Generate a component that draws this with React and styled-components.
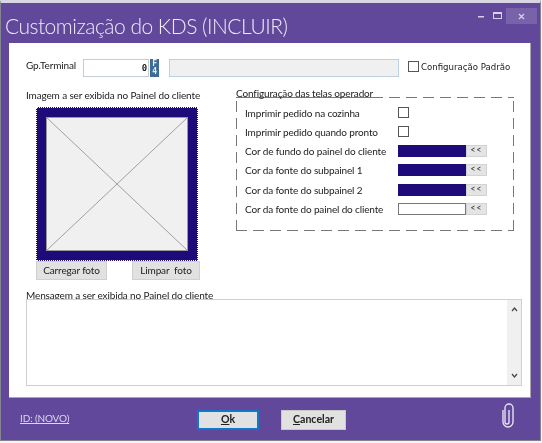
import React from "react";
import styled, { createGlobalStyle } from "styled-components";

const purple = "#61489b";
const navy = "#1e0a78";

const GlobalStyle = createGlobalStyle`
  html, body {
    margin: 0;
    background: #f4f4f6;
    font-family: Lato, "Noto Sans", sans-serif;
    color: #222;
  }
`;

const Frame = styled.div`
  box-sizing: border-box;
  width: 541px;
  height: 441px;
  padding: 0 2px 0 1px;
  background: ${purple};
  border: 1px solid #85858f;
  border-top: 3px solid #d9d6e4;
  display: flex;
  flex-direction: column;
  filter: blur(0.35px);
`;

const TitleBar = styled.div`
  height: 40px;
  flex: none;
  display: flex;
  justify-content: space-between;
  padding: 0 1px 0 3px;
`;

const Title = styled.h1`
  margin: 0;
  padding-top: 9px;
  font-family: Lato, "Open Sans", sans-serif;
  font-size: 21px;
  line-height: 28px;
  font-weight: 300;
  letter-spacing: -0.5px;
  color: #eeeaf6;
  white-space: nowrap;
`;

const WindowButtons = styled.div`
  display: flex;
  height: 16px;
  margin-top: 5px;
  color: #d8d2e8;
`;

const WindowButton = styled.div`
  width: ${(p) => p.$w}px;
  display: flex;
  align-items: center;
  justify-content: center;
  background: ${(p) => (p.$active ? "#7863ab" : "transparent")};
`;

const Panel = styled.div`
  box-sizing: border-box;
  width: 522px;
  height: 355px;
  flex: none;
  margin-left: 7px;
  padding: 16px 9px 0 17px;
  background: #fff;
  border: 1px solid #a9a6b0;
  border-width: 0 1px 1px 0;
  font-size: 10px;
  letter-spacing: -0.14px;
`;

const TopRow = styled.div`
  display: flex;
  align-items: center;
  height: 18px;
`;

const FieldLabel = styled.span`
  width: 57px;
  flex: none;
  padding-bottom: 6px;
  white-space: nowrap;
`;

const NumberInput = styled.div`
  box-sizing: border-box;
  width: 66px;
  height: 18px;
  border: 1px solid #c6ccd4;
  font-family: "DejaVu Sans Mono", monospace;
  font-weight: 700;
  font-size: 9px;
  line-height: 16px;
  text-align: right;
  padding-right: 1px;
`;

const LookupButton = styled.div`
  box-sizing: border-box;
  width: 9px;
  height: 18px;
  margin-left: 1px;
  background: #3c6d96;
  color: #e8eef5;
  font-family: "DejaVu Sans Mono", monospace;
  font-weight: 700;
  font-size: 8px;
  line-height: 8px;
  text-align: center;
  padding-top: 1px;
`;

const ReadonlyField = styled.div`
  box-sizing: border-box;
  width: 230px;
  height: 18px;
  margin-left: 10px;
  background: #f0f0f0;
  border: 1px solid #bcd0e2;
`;

const Check = styled.span`
  box-sizing: border-box;
  display: block;
  flex: none;
  width: 11px;
  height: 11px;
  background: #fff;
  border: 1px solid #555;
`;

const DefaultCheck = styled.label`
  display: flex;
  align-items: center;
  gap: 2px;
  margin: 0 0 3px 9px;
  font-family: "DejaVu Sans", sans-serif;
  font-size: 8.6px;
  letter-spacing: 0;
  white-space: nowrap;
`;

const Columns = styled.div`
  display: flex;
  margin-top: 11px;
`;

const ImageColumn = styled.div`
  width: 210px;
  flex: none;
`;

const Caption = styled.div`
  height: 14px;
  line-height: 14px;
  white-space: nowrap;
`;

const PhotoFrame = styled.div`
  box-sizing: border-box;
  width: 162px;
  height: 154px;
  margin: 5px 0 0 10px;
  background: ${navy};
  border: 1px dotted #fff;
  padding: 9px;
`;

const Placeholder = styled.svg`
  display: block;
  width: 142px;
  height: 134px;
  background: #f0f0f0;
`;

const PhotoButtons = styled.div`
  display: flex;
  justify-content: space-between;
  width: 164px;
  margin: 0 0 0 10px;
`;

const GrayButton = styled.div`
  box-sizing: border-box;
  width: ${(p) => p.$w}px;
  height: 19px;
  line-height: 17px;
  text-align: center;
  background: #e1e1e1;
  border: 1px solid #d0d0d0;
  white-space: nowrap;
`;

const Group = styled.div`
  position: relative;
  box-sizing: border-box;
  width: 278px;
  height: 134px;
  margin-top: 9px;
  padding: 6px 0 0 9px;
  background:
    repeating-linear-gradient(90deg, #777 0 11px, transparent 11px 17px) left top / 100% 1px no-repeat,
    repeating-linear-gradient(90deg, #777 0 11px, transparent 11px 17px) left bottom / 100% 1px no-repeat,
    repeating-linear-gradient(0deg, #777 0 11px, transparent 11px 17px) left top / 1px 100% no-repeat,
    repeating-linear-gradient(0deg, #777 0 11px, transparent 11px 17px) right top / 1px 100% no-repeat;
`;

const Legend = styled.div`
  position: absolute;
  left: 0;
  top: -11px;
  height: 11px;
  line-height: 14px;
  padding-right: 1px;
  border-bottom: 1px solid #777;
  white-space: nowrap;
`;

const OptionRow = styled.div`
  display: flex;
  align-items: center;
  height: 19.25px;
`;

const OptionLabel = styled.span`
  width: 153px;
  flex: none;
  white-space: nowrap;
`;

const Swatch = styled.span`
  box-sizing: border-box;
  display: block;
  width: 68px;
  height: 12px;
  background: ${(p) => p.$color};
  border: 1px solid ${(p) => (p.$color === "#fff" ? "#777" : p.$color)};
`;

const PickButton = styled.span`
  box-sizing: border-box;
  display: block;
  width: 21px;
  height: 12px;
  background: #e4e4e4;
  border: 1px solid #d2d2d2;
  font-size: 8.5px;
  line-height: 9px;
  letter-spacing: 1px;
  text-align: center;
`;

const MessageBlock = styled.div`
  margin-top: 8px;
`;

const MessageLabel = styled.div`
  height: 11px;
  line-height: 14px;
  white-space: nowrap;
`;

const MessageBox = styled.div`
  position: relative;
  box-sizing: border-box;
  width: 496px;
  height: 87px;
  background: #fff;
  border: 1px solid #cfcfcf;
  display: flex;
  justify-content: flex-end;
`;

const ScrollBar = styled.div`
  width: 14px;
  background: #f0f0f0;
  display: flex;
  flex-direction: column;
  justify-content: space-between;
  align-items: center;
  padding: 7px 0;
  color: #444;
`;

const Footer = styled.div`
  flex: 1;
  display: flex;
  align-items: flex-start;
  padding-left: 18px;
`;

const IdLink = styled.a`
  width: 177px;
  flex: none;
  margin-top: 14px;
  color: #dcd6ee;
  font-size: 10px;
  letter-spacing: -0.14px;
  text-decoration: underline;
`;

const ActionButton = styled.div`
  box-sizing: border-box;
  width: ${(p) => p.$w}px;
  height: 20px;
  margin: 12px 0 0 ${(p) => p.$gap}px;
  background: #e1e1e1;
  border: ${(p) => (p.$focus ? "2px solid #0f78c8" : "1px solid #c8c8c8")};
  font-size: 10.6px;
  font-weight: 700;
  line-height: ${(p) => (p.$focus ? 15 : 17)}px;
  text-align: center;
  color: #222;
  u { text-decoration: underline; }
`;

const Clip = styled.svg`
  width: 16px;
  height: 27px;
  margin: 4px 0 0 154px;
`;

const options = [
  { label: "Imprimir pedido na cozinha" },
  { label: "Imprimir pedido quando pronto" },
  { label: "Cor de fundo do painel do cliente", color: navy },
  { label: "Cor da fonte do subpainel 1", color: navy },
  { label: "Cor da fonte do subpainel 2", color: navy },
  { label: "Cor da fonte do painel do cliente", color: "#fff" },
];

export default function App() {
  return (
    <>
      <GlobalStyle />
      <Frame>
        <TitleBar>
          <Title>Customização do KDS (INCLUIR)</Title>
          <WindowButtons>
            <WindowButton $w={17}>
              <svg width="6" height="3"><rect y="1" width="6" height="1.5" fill="currentColor" /></svg>
            </WindowButton>
            <WindowButton $w={17}>
              <svg width="10" height="8"><rect x=".5" y=".5" width="8" height="6" fill="none" stroke="currentColor" /><rect width="9" height="2" fill="currentColor" /></svg>
            </WindowButton>
            <WindowButton $w={31} $active>
              <svg width="7" height="7"><path d="M1 1l5 5M6 1L1 6" stroke="currentColor" strokeWidth="1.2" /></svg>
            </WindowButton>
          </WindowButtons>
        </TitleBar>
        <Panel>
          <TopRow>
            <FieldLabel>Gp.Terminal</FieldLabel>
            <NumberInput>0</NumberInput>
            <LookupButton>F<br />4</LookupButton>
            <ReadonlyField />
            <DefaultCheck><Check />Configuração Padrão</DefaultCheck>
          </TopRow>
          <Columns>
            <ImageColumn>
              <Caption>Imagem a ser exibida no Painel do cliente</Caption>
              <PhotoFrame>
                <Placeholder viewBox="0 0 142 134">
                  <path d="M0 0L142 134M142 0L0 134" stroke="#a0a0a0" fill="none" />
                  <rect x=".5" y=".5" width="141" height="133" fill="none" stroke="#9a9a9a" />
                </Placeholder>
              </PhotoFrame>
              <PhotoButtons>
                <GrayButton $w={71}>Carregar foto</GrayButton>
                <GrayButton $w={68}>Limpar&nbsp; foto</GrayButton>
              </PhotoButtons>
            </ImageColumn>
            <Group>
              <Legend>Configuração das telas operador</Legend>
              {options.map((o) => (
                <OptionRow key={o.label}>
                  <OptionLabel>{o.label}</OptionLabel>
                  {o.color ? (
                    <>
                      <Swatch $color={o.color} />
                      <PickButton>&lt;&lt;</PickButton>
                    </>
                  ) : (
                    <Check />
                  )}
                </OptionRow>
              ))}
            </Group>
          </Columns>
          <MessageBlock>
            <MessageLabel>Mensagem a ser exibida no Painel do cliente</MessageLabel>
            <MessageBox>
              <ScrollBar>
                <svg width="7" height="5"><path d="M1 4l2.5-3L6 4" fill="none" stroke="currentColor" strokeWidth="1.2" /></svg>
                <svg width="7" height="5"><path d="M1 1l2.5 3L6 1" fill="none" stroke="currentColor" strokeWidth="1.2" /></svg>
              </ScrollBar>
            </MessageBox>
          </MessageBlock>
        </Panel>
        <Footer>
          <IdLink>ID: (NOVO)</IdLink>
          <ActionButton $w={62} $gap={0} $focus><u>O</u>k</ActionButton>
          <ActionButton $w={65} $gap={22}><u>C</u>ancelar</ActionButton>
          <Clip viewBox="0 0 16 27">
            <path d="M3 8v12a5 5 0 0 0 10 0V6a4 4 0 0 0-8 0v14a2 2 0 0 0 4 0V8" fill="none" stroke="#e6e0f2" strokeWidth="1.4" />
          </Clip>
        </Footer>
      </Frame>
    </>
  );
}
